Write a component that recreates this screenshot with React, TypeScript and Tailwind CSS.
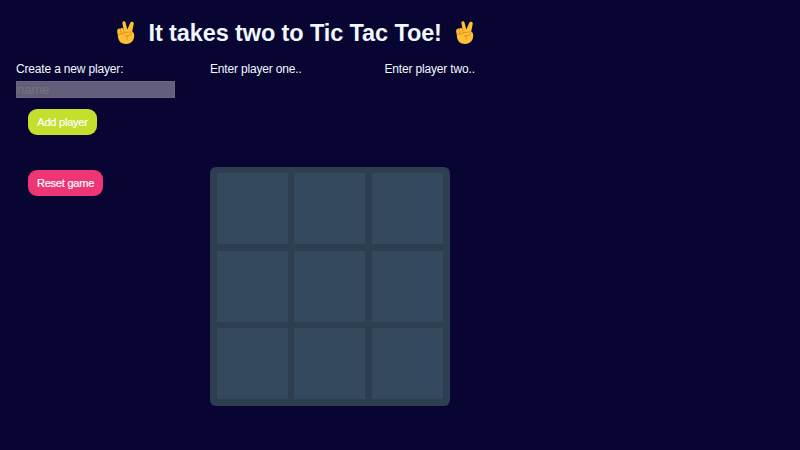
function VictoryHand() {
  return (
    <svg viewBox="0 0 18 23" className="h-[23px] w-[18px] shrink-0">
      <path
        d="M6.5 8 5.4 2.2C5.2.1 7.9-.4 8.6 1.7l1.7 6.9L13.2 2c.8-2 4.1-1.3 3.5.9l-1.5 7.6c1.7 1.2 2.1 2.4 2 4.3-.2 4.8-2.8 8.1-8 8.1-4.8 0-7.6-2.8-8.1-6.5L.2 10.5C-.1 7.9 1.9 6.8 3.3 7.7c.9-1 2.6-.8 3.2.3z"
        fill="#fdc133"
      />
      <path
        d="M3.4 8.2l.9 4.2M6.6 8.2l.7 3.8M1 12.7c1.2 1.3 2.9 1 3.4-.4M4.5 12.7c1 .9 2.5.4 2.8-.9l5.4-.9c2.2-.1 2.4 2.9.3 3.3l-3.9.6M8.5 14.6c1.7.6 2.3 2 1.8 3.7"
        fill="none"
        stroke="#e18a1d"
        strokeWidth="0.9"
        strokeLinecap="round"
      />
    </svg>
  );
}

export default function App() {
  return (
    <main className="h-[450px] w-[800px] overflow-hidden bg-[#080532] font-['Liberation_Sans',Arial,sans-serif] text-[#f0f8ff]">
      <header className="flex h-[60px] items-start pt-[21px] pl-[117px]">
        <VictoryHand />
        <h1 className="ml-[13px] w-[307.5px] pl-[0.5px] text-[23.5px] leading-[24px] font-bold tracking-[-0.11px] whitespace-nowrap">
          It takes two to Tic Tac Toe!
        </h1>
        <VictoryHand />
      </header>
      <div className="flex pl-[16px]">
        <section className="flex w-[194px] flex-col items-start">
          <label htmlFor="player" className="h-[21px] text-[12px] leading-[18px] tracking-[-0.17px]">
            Create a new player:
          </label>
          <input
            id="player"
            placeholder="name"
            className="h-[17px] w-[159px] border border-[#6b6680] bg-[#635e7a] text-[13px] leading-[15px] placeholder:text-[#757575]"
          />
          <button className="mt-[11px] ml-[12px] h-[26px] w-[69px] rounded-[9px] bg-[#c6df2c] pt-px text-[11px] tracking-[-0.22px] text-white [-webkit-text-stroke:0.2px_white]">
            Add player
          </button>
          <button className="mt-[35px] ml-[12px] h-[26px] w-[75px] rounded-[9px] bg-[#ee3576] pt-px text-[11px] tracking-[-0.22px] text-white [-webkit-text-stroke:0.2px_white]">
            Reset game
          </button>
        </section>
        <section>
          <div className="flex h-[106.5px] text-[12px] leading-[18px] tracking-[-0.17px]">
            <p className="w-[174.5px]">Enter player one..</p>
            <p>Enter player two..</p>
          </div>
          <div className="grid h-[239.5px] w-[239.5px] grid-cols-3 grid-rows-3 gap-[6.5px] rounded-[6px] bg-[#2c3e50] p-[6.5px]">
            {Array.from({ length: 9 }, (_, i) => (
              <div key={i} className="bg-[#34495e]" />
            ))}
          </div>
        </section>
      </div>
    </main>
  );
}
